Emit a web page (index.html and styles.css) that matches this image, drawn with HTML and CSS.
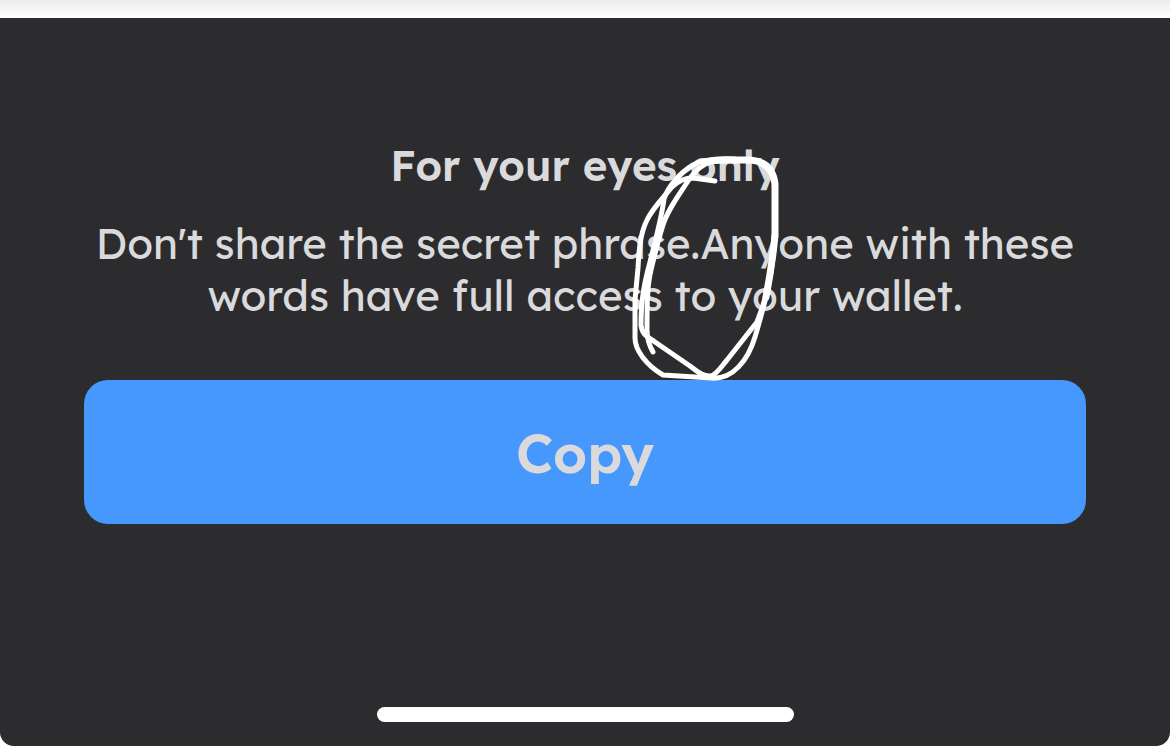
FILE: index.html
```html
<!DOCTYPE html>
<html lang="en">
<head>
  <meta charset="UTF-8">
  <meta name="viewport" content="width=device-width, initial-scale=1">
  <title>Secret phrase</title>
  <link rel="stylesheet" href="styles.css">
</head>
<body>
  <main class="sheet">
    <section class="message">
      <h1>For your eyes only</h1>
      <p>Don't share the secret phrase.Anyone with these words have full access to your wallet.</p>

      <!-- Hand-drawn loop -->
      <svg class="scribble" width="180" height="250" viewBox="620 140 180 250" aria-hidden="true">
        <path d="M715 181 L693 178 C685 178 678 181 672 187 C664 197 652 209 647 220 C640 234 639 250 638 268 L635 300 L635 338 C635 350 646 365 663 375 L711 378 C733 380 748 360 755 337 C765 303 773 275 775 235"/>
        <path d="M735 159 C715 158 702 160 693 165 C680 173 668 186 664 199 C662 216 656 238 650 262 C644 284 641 300 641 325 C642 335 648 337 655 342 L690 366 C698 372 704 377 711 376 C717 374 721 367 727 360 L757 322 C766 300 773 269 774 235"/>
        <path class="bold" d="M706 162 C716 159 726 160 735 160 L750 160 C764 161 773 168 775 184 L775 235 C773 257 770 276 766 297"/>
        <path d="M712 161 C704 164 696 170 690 178 C679 195 668 209 663 225 C657 244 653 262 651 270 C647 287 647 304 647 330 C647 339 649 345 653 352"/>
      </svg>
    </section>
    <button class="copy" type="button">Copy</button>
    <div class="home-bar"></div>
  </main>
</body>
</html>
```

FILE: styles.css
```css
* {
  box-sizing: border-box;
}
body {
  margin: 0;
  min-height: 100vh;
  padding-top: 18px;
  display: flex;
  background: linear-gradient(#ececec, #ffffff 18px) no-repeat #ffffff;
  color: #dadadc;
  font-family: Lexend, Inter, sans-serif;
}
.sheet {
  flex: 1;
  display: flex;
  flex-direction: column;
  align-items: center;
  padding: 122px 84px 24px;
  background: #2c2c2e;
  border-radius: 0 0 14px 14px;
}
.message {
  position: relative;
  width: 100%;
  text-align: center;
}
h1 {
  margin: 0 0 26px;
  font-size: 42px;
  line-height: 52px;
  font-weight: 600;
}
p {
  margin: 0 0 58px;
  font-size: 42px;
  line-height: 52px;
}
.scribble {
  position: absolute;
  top: 0;
  left: calc(50% + 35px);
  fill: none;
  stroke: #ffffff;
  stroke-width: 5;
  stroke-linecap: round;
  stroke-linejoin: round;
  pointer-events: none;
}
.scribble .bold {
  stroke-width: 7;
}
.copy {
  width: 100%;
  height: 144px;
  padding: 2px 0 0;
  border: 0;
  border-radius: 24px;
  background: #4698fc;
  color: #dadadc;
  font: inherit;
  font-size: 54px;
  font-weight: 600;
}
.home-bar {
  width: 417px;
  max-width: 100%;
  height: 15px;
  margin-top: auto;
  border-radius: 8px;
  background: #ffffff;
}
```
